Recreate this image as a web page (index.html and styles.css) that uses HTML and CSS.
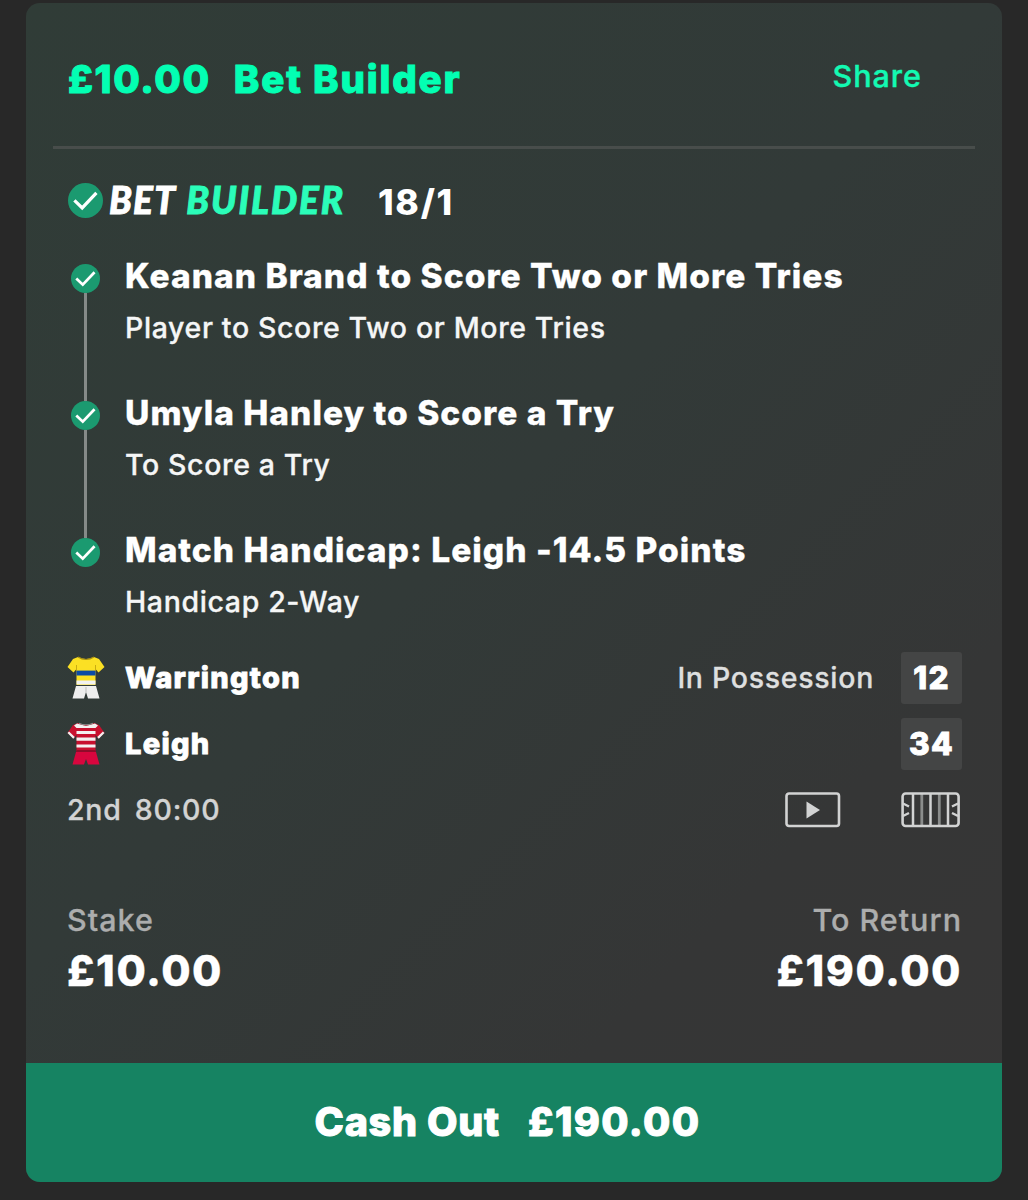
FILE: index.html
```html
<!DOCTYPE html>
<html lang="en">
<head>
<meta charset="utf-8">
<title>Bet Builder</title>
<link rel="stylesheet" href="styles.css">
</head>
<body>
<svg width="0" height="0" class="defs">
  <symbol id="check" viewBox="0 0 34 34">
    <circle cx="17" cy="17" r="17" fill="#1b9a70"/>
    <path d="M6.2 16.9 13.8 24.2 27.6 9.7" fill="none" stroke="#fff" stroke-width="3.2"/>
  </symbol>
</svg>
<main class="card">
  <header class="head">
    <h1 class="title"><span class="amount">£10.00</span><span class="kind">Bet Builder</span></h1>
    <a class="share">Share</a>
  </header>
  <section class="builder">
    <svg class="check-lg"><use href="#check"/></svg>
    <div class="logo"><span>BET</span><span class="mint">BUILDER</span></div>
    <span class="odds">18/1</span>
  </section>
  <ul class="legs">
    <li class="leg">
      <div class="rail"><svg class="check-sm"><use href="#check"/></svg><i class="line"></i></div>
      <div><div class="leg-title">Keanan Brand to Score Two or More Tries</div><div class="leg-sub">Player to Score Two or More Tries</div></div>
    </li>
    <li class="leg">
      <div class="rail"><svg class="check-sm"><use href="#check"/></svg><i class="line"></i></div>
      <div><div class="leg-title">Umyla Hanley to Score a Try</div><div class="leg-sub">To Score a Try</div></div>
    </li>
    <li class="leg">
      <div class="rail"><svg class="check-sm"><use href="#check"/></svg></div>
      <div><div class="leg-title">Match Handicap: Leigh -14.5 Points</div><div class="leg-sub">Handicap 2-Way</div></div>
    </li>
  </ul>
  <section class="match">
    <div class="team">
      <svg class="kit" viewBox="0 0 38 44">
        <path d="M11 1Q19 5 27 1L32 3 37.500 11 31.500 16.500 28.500 13V29H9.500V13L6.500 16.500.5 11 6 3Z" fill="#fbe024"/>
        <path d="M11 1Q19 6 27 1" fill="none" stroke="#a88f12" stroke-width="1.2"/>
        <path d="M9.500 9V15M28.500 9V15" stroke="#c9ac12"/>
        <path d="M9.500 14.600H28.500V19.500H9.500Z" fill="#0c4ba5"/>
        <path d="M9.500 24.500H28.500V28.500H9.500Z" fill="#f1f1f1"/>
        <path d="M9 30H29L32.500 42.500H21L19 36 17 42.500H5.500Z" fill="#eee"/>
        <path d="M19 31V36" stroke="#bbb"/>
      </svg>
      <span class="name">Warrington</span>
      <span class="possession">In Possession</span>
      <span class="score">12</span>
    </div>
    <div class="team">
      <svg class="kit" viewBox="0 0 38 44">
        <path d="M11 1Q19 5 27 1L32 3 37.500 11 31.500 16.500 28.500 13V29H9.500V13L6.500 16.500.5 11 6 3Z" fill="#c8102e"/>
        <path d="M10 1.500 19 4 28 1.500 31 3.500 28.500 6H9.500L7 3.500Z" fill="#f3f0f0"/>
        <path d="M12 1.200Q19 4.500 26 1.200" fill="none" stroke="#8c8c8c" stroke-width="1.1"/>
        <path d="M9.500 10.500H28.500M9.500 17.200H28.500M9.500 24H28.500" stroke="#f3f0f0" stroke-width="3.200"/>
        <path d="M1.300 10.300 7 15.900M36.700 10.300 31 15.900" stroke="#f3f0f0" stroke-width="2.200"/>
        <path d="M9.500 28H28.500L29 30H9Z" fill="#8f0c2a"/>
        <path d="M9 30H29L32.500 42.500H21L19 37 17 42.500H5.500Z" fill="#d8063e"/>
      </svg>
      <span class="name">Leigh</span>
      <span class="score">34</span>
    </div>
    <div class="status">
      <span class="clock"><span>2nd</span><span>80:00</span></span>
      <svg class="video" viewBox="0 0 56 36"><rect x="1.500" y="1.500" width="52.500" height="32.500" rx="2.500" fill="none" stroke="#d2d3d3" stroke-width="2.600"/><path d="M21.500 9.500V26.500L35 18Z" fill="#d2d3d3"/></svg>
      <svg class="pitch" viewBox="0 0 59 36"><path d="M20.800 2V33M38.300 2V33" stroke="#8b8d8c" stroke-width="2.800"/><path d="M12 2V33M29.500 2V33M47 2V33" stroke="#d2d3d3" stroke-width="2.500"/><rect x="1.600" y="1.500" width="56" height="32.500" rx="3" fill="none" stroke="#d2d3d3" stroke-width="2.600"/><path d="M2 11.500 8 14.500M2 24 8 21M57 11.500 51 14.500M57 24 51 21" stroke="#d2d3d3" stroke-width="2.500"/></svg>
    </div>
  </section>
  <section class="totals">
    <div><div class="label">Stake</div><div class="value">£10.00</div></div>
    <div class="right"><div class="label">To Return</div><div class="value">£190.00</div></div>
  </section>
  <button class="cash"><span>Cash Out</span><span class="cash-value">£190.00</span></button>
</main>
</body>
</html>
```
FILE: styles.css
```css
* { box-sizing: border-box; }
body { margin: 0; padding: 3px 26px 0; height: 1200px; background: #282828; font-family: Inter, "Liberation Sans", sans-serif; color: #fff; overflow: hidden; }
.defs { position: absolute; }
svg { display: block; flex: none; }
.card { width: 976px; height: 1179px; border-radius: 14px; overflow: hidden; display: flex; flex-direction: column; background: linear-gradient(135deg, #303c37 0%, #323a38 45%, #353636 75%, #373636 100%); white-space: nowrap; }
.head { flex: none; height: 146px; margin: 0 27px; padding: 0 53px 0 15px; border-bottom: 3px solid #484d4b; display: flex; justify-content: space-between; }
.title { margin: 0; display: flex; gap: 23px; font-size: 38.500px; font-weight: 800; line-height: 152px; color: #03ffb3; letter-spacing: 1.600px; -webkit-text-stroke: 1px #03ffb3; }
.kind { letter-spacing: 1.850px; }
.share { font-size: 30.500px; font-weight: 500; line-height: 146px; color: #13f9b2; letter-spacing: 1px; -webkit-text-stroke: .4px #13f9b2; }
.builder { flex: none; height: 98px; padding-left: 42px; display: flex; align-items: flex-start; }
.check-lg { width: 35px; height: 35px; margin-top: 34px; }
.logo { margin-left: 6px; width: 269px; display: flex; gap: 10px; line-height: 102px; font-family: Lato, sans-serif; font-size: 37px; font-weight: 900; font-style: italic; letter-spacing: 1.200px; -webkit-text-stroke: .9px; }
.mint { color: #2bfdb9; letter-spacing: 1.900px; }
.odds { font-size: 35.500px; font-weight: 800; line-height: 107px; letter-spacing: 1.700px; }
.legs { list-style: none; margin: 0; padding: 0 0 0 42px; }
.leg { display: flex; height: 137px; }
.rail { width: 35px; margin-right: 22px; padding-top: 17px; display: flex; flex-direction: column; align-items: center; height: 154px; }
.check-sm { width: 29px; height: 29px; }
.line { width: 3px; flex: 1; background: #858a88; }
.leg-title { font-size: 33.500px; font-weight: 800; line-height: 58px; letter-spacing: 1.030px; -webkit-text-stroke: .3px #fff; }
.leg-sub { font-size: 28.500px; font-weight: 500; line-height: 46px; color: #f5f6f6; letter-spacing: .63px; -webkit-text-stroke: .3px #f5f6f6; }
.match { padding: 0 40px 0 41px; margin-top: -13px; }
.team { height: 66px; display: flex; align-items: center; }
.kit { width: 38px; height: 44px; margin-right: 20px; }
.name { font-size: 29px; font-weight: 800; margin-right: auto; letter-spacing: 1.300px; -webkit-text-stroke: .9px #fff; position: relative; top: -1px; }
.possession { font-size: 28.500px; font-weight: 500; color: #dedfdf; margin-right: 27px; letter-spacing: .7px; -webkit-text-stroke: .3px; position: relative; top: -1px; }
.score { width: 61px; height: 52px; border-radius: 3px; background: #444545; font-size: 31.500px; font-weight: 800; line-height: 52px; text-align: center; letter-spacing: 1.200px; -webkit-text-stroke: .9px #fff; }
.status { height: 66px; display: flex; align-items: center; padding-right: 2px; }
.clock { font-size: 28.500px; font-weight: 500; color: #d2d3d3; display: flex; gap: 13px; margin-right: auto; letter-spacing: .8px; -webkit-text-stroke: .3px; position: relative; top: -1px; }
.video { width: 56px; height: 36px; margin-right: 60px; }
.pitch { width: 59px; height: 36px; }
.totals { padding: 52px 40px 0 41px; display: flex; justify-content: space-between; }
.right { text-align: right; }
.label { font-size: 30.500px; font-weight: 500; line-height: 50px; color: #acadad; letter-spacing: 1px; -webkit-text-stroke: .3px; }
.value { font-size: 42.500px; font-weight: 800; line-height: 52px; letter-spacing: 1.500px; -webkit-text-stroke: .3px; }
.cash { margin: auto 0 0; border: 0; height: 119px; background: #168362; color: #fff; font: 800 39.500px/118px Inter, sans-serif; letter-spacing: .7px; -webkit-text-stroke: 1px #fff; padding: 0 13px 0 0; display: flex; justify-content: center; gap: 28px; flex: none; }
.cash-value { letter-spacing: 1.400px; }
```
